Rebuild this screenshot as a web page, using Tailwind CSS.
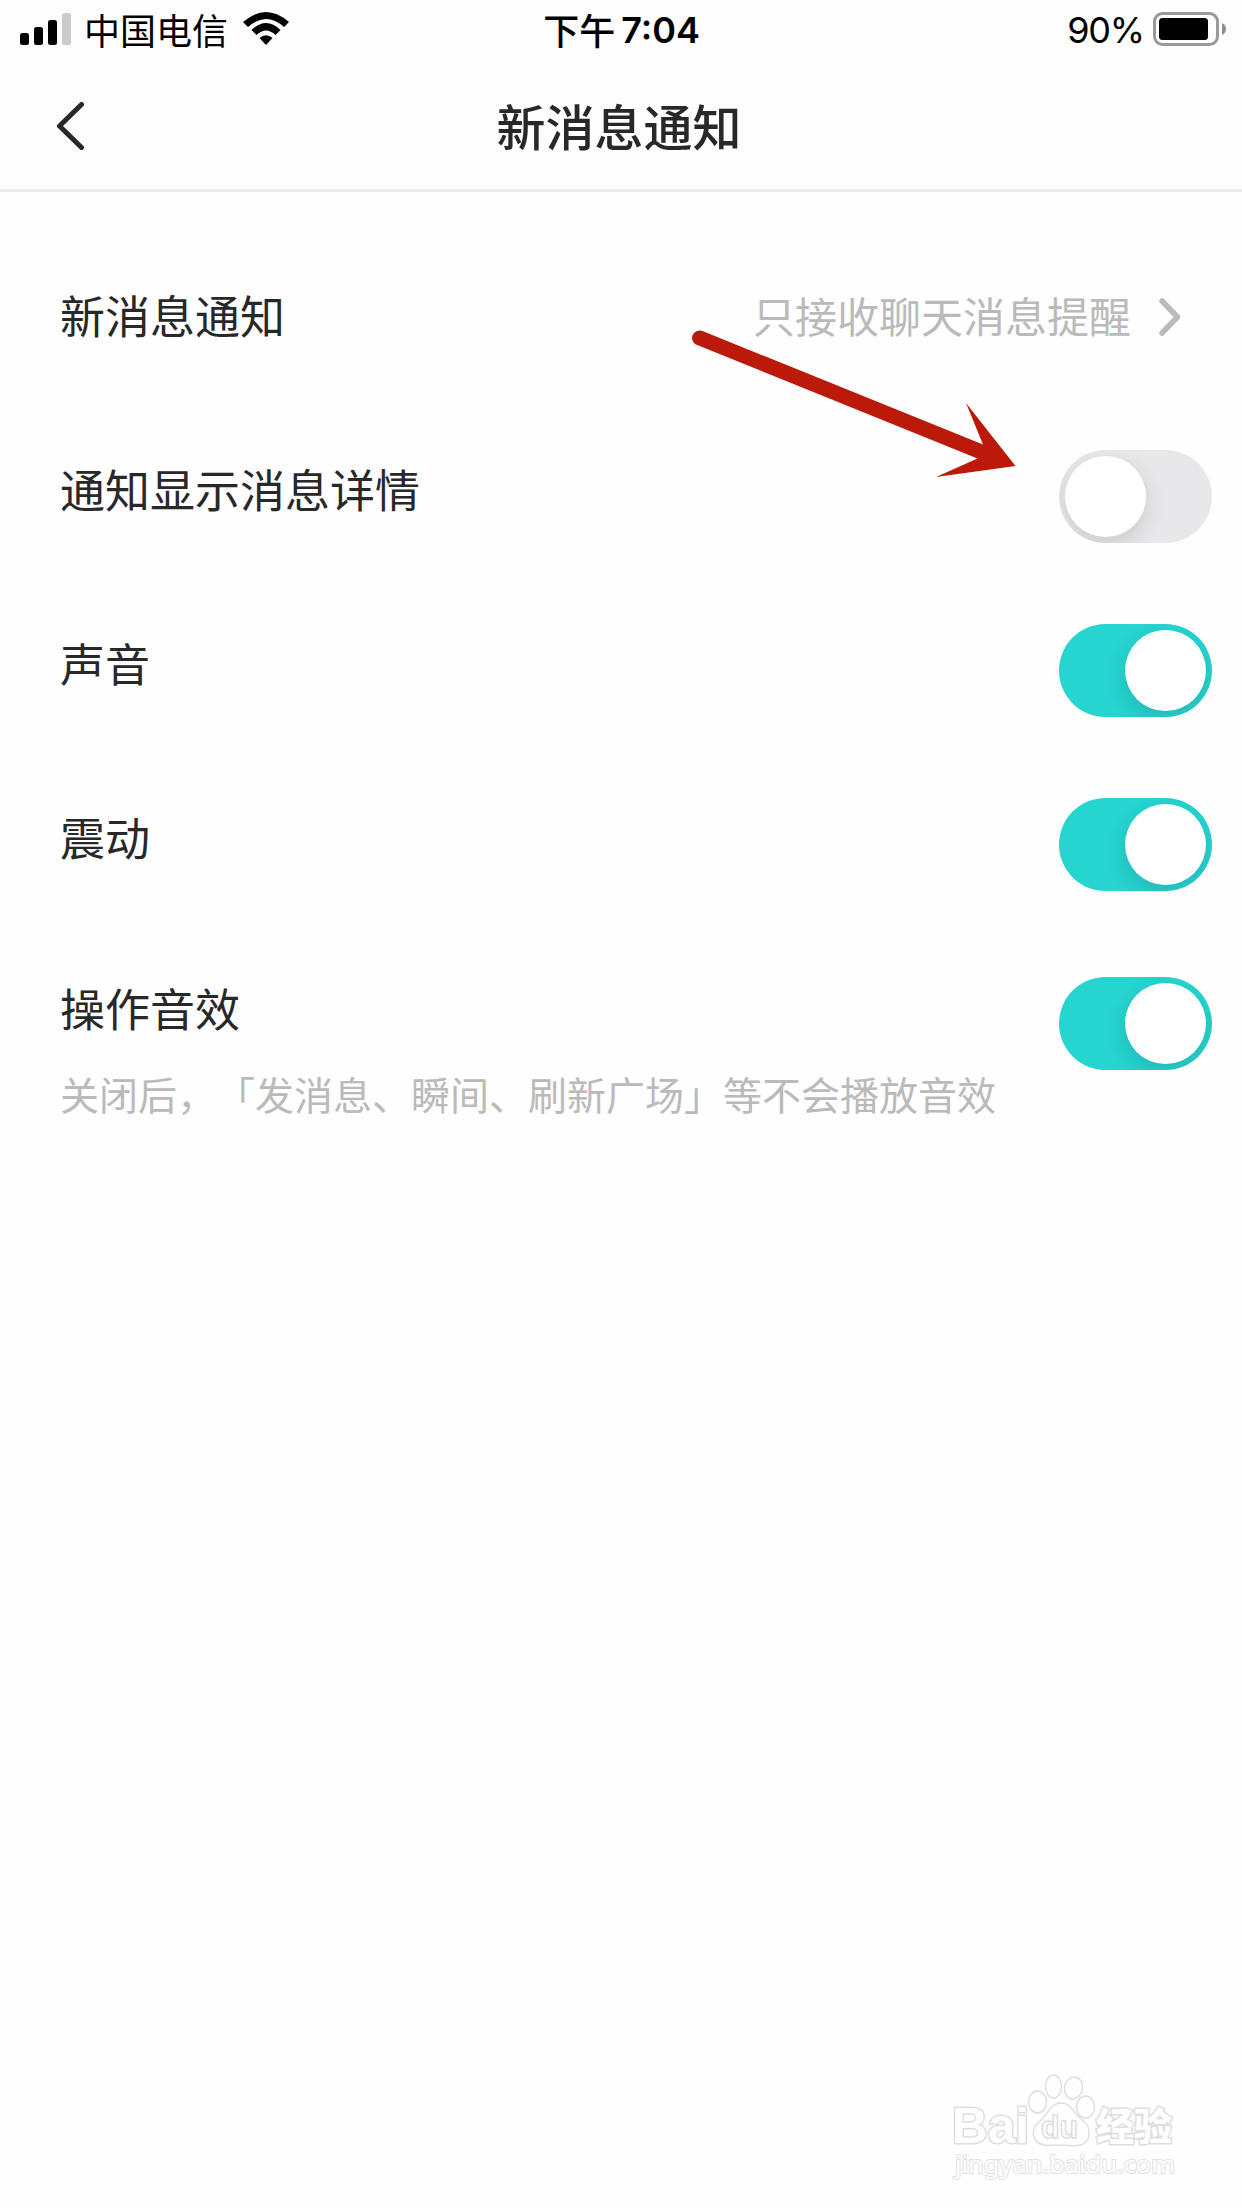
<!doctype html>
<html lang="zh-CN">
  <head>
    <meta charset="UTF-8" />
    <meta name="viewport" content="width=device-width, initial-scale=1.0" />
    <title>新消息通知</title>
    <script src="https://cdn.jsdelivr.net/npm/@tailwindcss/browser@4"></script>
  </head>
  <body class="bg-[#fefefe] text-[#282828] font-['Noto_Sans_CJK_SC',sans-serif]">
    <div class="relative flex flex-col w-[1242px] h-[2208px] overflow-hidden">
      <header class="h-48 bg-[#fdfdfd] border-b-[3px] border-[#ebebeb]">
        <!-- Status bar -->
        <div class="grid grid-cols-3 h-[60px] pl-5 pr-4 text-black text-[36px] leading-[60px]">
          <div class="flex items-center">
            <svg class="-mt-0.5 w-[51px] h-8" viewBox="0 0 51 32">
              <rect x="0" y="20" width="9" height="12" rx="2.5" />
              <rect x="14" y="14" width="9" height="18" rx="2.5" />
              <rect x="28" y="7" width="9" height="25" rx="2.5" />
              <rect x="42" y="0" width="9" height="32" rx="2.5" fill="#cbcbcb" />
            </svg>
            <span class="ml-[13px] -mt-0.5">中国电信</span>
            <svg class="ml-[15px] -mt-[3px] w-[46px] h-[33px]" viewBox="0 0 46 33">
              <path d="M0 10Q23-10 46 10L41 15Q23-1 5 15Z" />
              <path d="M8.500 18Q23 4 37.500 18L32.500 23Q23 14 13.500 23Z" />
              <path d="M16.500 26Q23 20.500 29.500 26L23 33Z" />
            </svg>
          </div>
          <div class="flex items-center justify-center pr-[3px] font-medium">
            <span class="-mt-0.5">下午</span>
            <span class="ml-1.5 font-['Inter'] font-semibold">7:04</span>
          </div>
          <div class="flex items-center justify-end">
            <span class="font-['Inter'] tracking-[-1.2px]">90%</span>
            <svg class="ml-2 -mt-0.5 w-[74px] h-[34px]" viewBox="0 0 74 34">
              <rect x="2.500" y="1.500" width="63" height="31" rx="8" fill="none" stroke="#999" stroke-width="3" />
              <rect x="7" y="6" width="49" height="22" rx="3.500" />
              <path d="M70 11Q74 13 74 17Q74 21 70 23Z" fill="#8f8f8f" />
            </svg>
          </div>
        </div>
        <!-- Title bar -->
        <div class="grid grid-cols-3 items-center h-[129px] pt-0.5">
          <svg class="ml-14 w-7 h-12" viewBox="0 0 28 48" fill="none" stroke="#282828" stroke-width="5" stroke-linecap="round" stroke-linejoin="round">
            <path d="M25.500 2.500L3.500 24L25.500 45.500" />
          </svg>
          <h1 class="-mt-0.5 pr-1 text-center text-[49px] leading-none font-medium">新消息通知</h1>
        </div>
      </header>

      <main class="flex flex-col pt-9 pl-[60px] pr-[30px] text-[45px]">
        <div class="flex items-center justify-between h-[174px]">
          <span>新消息通知</span>
          <div class="flex items-center mr-[31px] text-[42px] text-[#bababa]">
            <span class="-mt-0.5">只接收聊天消息提醒</span>
            <svg class="ml-[28px] mt-1 w-[22px] h-[38px]" viewBox="0 0 22 38" fill="none" stroke="#bababa" stroke-width="5.500" stroke-linecap="round" stroke-linejoin="round">
              <path d="M3 3L18.500 19L3 35" />
            </svg>
          </div>
        </div>
        <div class="flex items-center justify-between h-[174px]">
          <span>通知显示消息详情</span>
          <div class="flex items-center mt-[14px] w-[153px] h-[93px] px-1.5 rounded-full overflow-hidden bg-[#e8e8ea]">
            <div class="size-[81px] rounded-full bg-white shadow-[0_8px_22px_rgba(0,0,0,0.13)]"></div>
          </div>
        </div>
        <div class="flex items-center justify-between h-[174px]">
          <span>声音</span>
          <div class="flex items-center justify-end mt-[14px] w-[153px] h-[93px] px-1.5 rounded-full overflow-hidden bg-[#26d4d0]">
            <div class="size-[81px] rounded-full bg-white shadow-[0_8px_22px_rgba(0,0,0,0.13)]"></div>
          </div>
        </div>
        <div class="flex items-center justify-between h-[174px]">
          <span>震动</span>
          <div class="flex items-center justify-end mt-[14px] w-[153px] h-[93px] px-1.5 rounded-full overflow-hidden bg-[#26d4d0]">
            <div class="size-[81px] rounded-full bg-white shadow-[0_8px_22px_rgba(0,0,0,0.13)]"></div>
          </div>
        </div>
        <div class="flex items-start justify-between pt-[53px]">
          <div class="flex flex-col">
            <span class="mt-px leading-[60px]">操作音效</span>
            <span class="mt-[25px] text-[39px] leading-[60px] text-[#bababa] [text-spacing-trim:space-all]">关闭后，「发消息、瞬间、刷新广场」等不会播放音效</span>
          </div>
          <div class="flex items-center justify-end w-[153px] h-[93px] px-1.5 rounded-full overflow-hidden bg-[#26d4d0]">
            <div class="size-[81px] rounded-full bg-white shadow-[0_8px_22px_rgba(0,0,0,0.13)]"></div>
          </div>
        </div>
      </main>

      <!-- Pointer arrow over the list -->
      <svg class="absolute left-[680px] top-[320px] w-[350px] h-[170px]" viewBox="0 0 350 170" fill="#bb1a0b">
        <path d="M22.500 11L303 124.500L286 83L335.500 146L256 157L297.500 138.500L16 24.500A7.500 7.500 0 0 1 22.500 11Z" />
      </svg>

      <!-- Watermark -->
      <svg class="absolute left-[943px] top-[2065px] w-[240px] h-[125px]" viewBox="0 0 240 125" fill="#fefefe" stroke="#dedede" stroke-width="1.500">
        <g paint-order="stroke" stroke-width="3">
          <text x="9" y="78" class="font-['Liberation_Sans'] font-bold" font-size="50" textLength="77" lengthAdjust="spacingAndGlyphs">Bai</text>
          <text x="153" y="75" class="font-black" font-size="38" textLength="76" lengthAdjust="spacingAndGlyphs">经验</text>
          <text x="12" y="108" class="font-['Noto_Sans']" font-size="24" stroke="#e2e2e2" stroke-width="2" textLength="220" lengthAdjust="spacingAndGlyphs">jingyan.baidu.com</text>
        </g>
        <ellipse cx="94.500" cy="37" rx="9" ry="11" />
        <ellipse cx="110.500" cy="21.500" rx="8" ry="11.500" />
        <ellipse cx="130.500" cy="23" rx="9" ry="11" transform="rotate(12 130.500 23)" />
        <ellipse cx="142.500" cy="42" rx="9" ry="11" />
        <path d="M118 38C128 38 130 47 138 54C150 62 149 80 134 80.500C125 81.500 113 79 105 80.500C88 80 87 65 96 57C105 50 107 38 118 38Z" />
        <text x="98" y="73" class="font-['Liberation_Sans'] font-bold" font-size="31" textLength="37" lengthAdjust="spacingAndGlyphs">du</text>
      </svg>
    </div>
  </body>
</html>
